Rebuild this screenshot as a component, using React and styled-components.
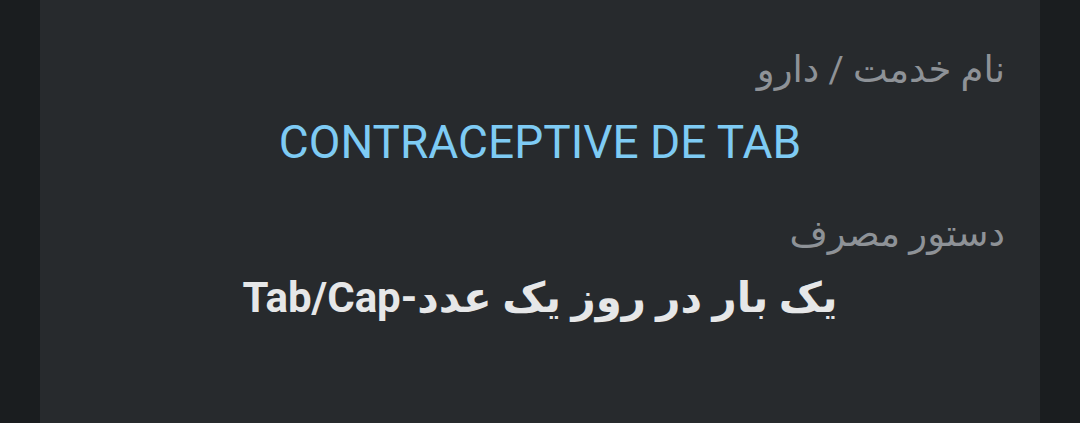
import React from "react";
import styled, { createGlobalStyle } from "styled-components";

const GlobalStyle = createGlobalStyle`
  html, body {
    margin: 0;
    padding: 0;
    background: #1a1d1f;
    height: 100%;
    overflow: hidden;
  }
  #root {
    height: 100%;
  }
`;

const Page = styled.div`
  height: 100%;
  padding: 0 40px;
  box-sizing: border-box;
  background: #1a1d1f;
`;

const Card = styled.div`
  background: #272a2d;
  min-height: 100%;
  padding: 46px 35px 40px;
  box-sizing: border-box;
  direction: rtl;
  font-family: Roboto, "DejaVu Sans", sans-serif;
`;

const Field = styled.div`
  display: flex;
  flex-direction: column;
  margin-bottom: ${(p) => p.gap || 0}px;
`;

const Label = styled.div`
  color: #8e9297;
  font-size: 37px;
  line-height: 48px;
  text-align: right;
`;

const Value = styled.div`
  color: ${(p) => p.color};
  font-size: ${(p) => p.size}px;
  font-weight: ${(p) => p.weight || 400};
  line-height: 60px;
  text-align: center;
  margin-top: ${(p) => p.offset}px;
`;

export default function App() {
  return (
    <>
      <GlobalStyle />
      <Page>
        <Card>
          <Field gap={38}>
            <Label>نام خدمت / دارو</Label>
            <Value color="#7ecbf4" size={46} offset={18}>
              CONTRACEPTIVE DE TAB
            </Value>
          </Field>
          <Field>
            <Label>دستور مصرف</Label>
            <Value color="#e6e7e8" size={42} weight={700} offset={10}>
              یک بار در روز یک عدد-Tab/Cap
            </Value>
          </Field>
        </Card>
      </Page>
    </>
  );
}
